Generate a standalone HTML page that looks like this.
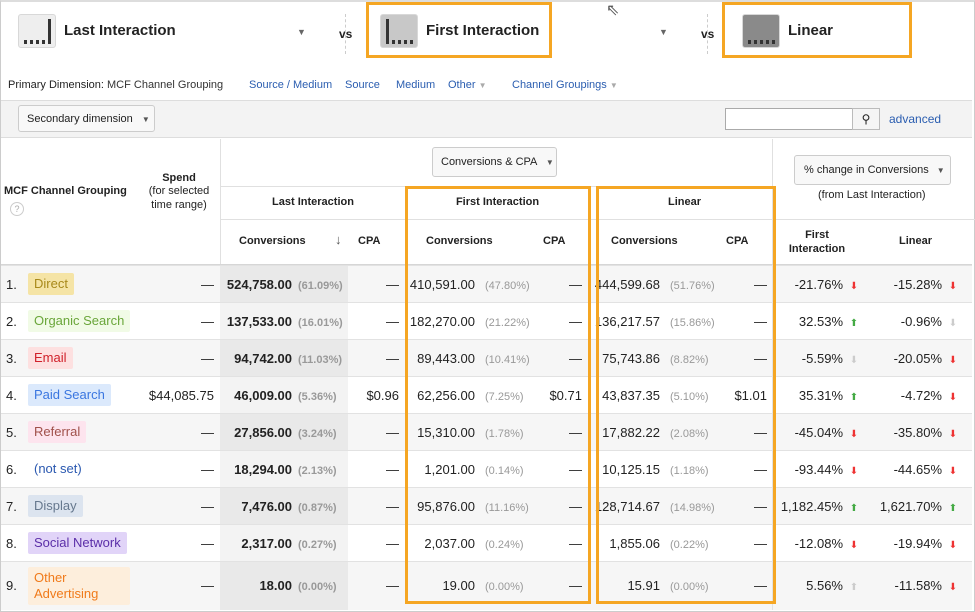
<!DOCTYPE html>
<html><head><meta charset="utf-8"><style>
*{margin:0;padding:0;box-sizing:border-box}
body{width:975px;height:612px;overflow:hidden;background:#fff;font-family:"Liberation Sans",Arial,sans-serif;font-size:13px;color:#222;position:relative}
.a{position:absolute}
.ico{position:absolute;width:38px;height:34px;border:1px solid #d8d8d8;border-radius:3px;background:#eee}
.ico i{position:absolute;background:#333}
.t{font-weight:bold;font-size:15px;color:#222}
.lnk{color:#2a5db0;font-size:11px}
.ob{position:absolute;border:3px solid #f5a623}
.hl{position:absolute;background:#e0e0e0}
.th{position:absolute;font-weight:bold;font-size:11px;text-align:center;color:#222}
table{position:absolute;left:1px;top:265px;border-collapse:collapse;table-layout:fixed;width:971px}
td{height:37px;border-top:1px solid #e2e2e2;font-size:13px;white-space:nowrap;padding:0}
tr:last-child td{height:48px}
tr.o td{background:#f6f6f6}
tr.o td.li{background:#e9e9e9}
td.li{background:#f3f3f3;text-align:right;padding-right:6px;font-weight:bold}
.p{font-size:11px;color:#999;font-weight:normal}
.li .p{color:#999;font-weight:bold;display:inline-block;width:50px;text-align:left;padding-left:6px}
.fc{text-align:right}
.fc .p{display:inline-block;width:55px;text-align:left;padding-left:10px}
.r{text-align:right}
.chip{display:inline-block;padding:3px 6px;border-radius:2px;font-size:13px;line-height:16px}
.up{color:#4a4}.dn{color:#e33}.gr{color:#ccc}
.ar{display:inline-block;width:22px;text-align:center;font-size:10px}
td.c2{padding-right:8px}
</style></head><body>
<div class="a" style="left:0;top:0;width:975px;height:612px;border:1px solid #ccc;border-top:2px solid #ddd"></div>
<div class="ico" style="left:18px;top:14px"><i style="left:29px;top:4px;width:3px;height:25px"></i><i style="left:5px;top:25px;width:3px;height:4px"></i><i style="left:11px;top:25px;width:3px;height:4px"></i><i style="left:17px;top:25px;width:3px;height:4px"></i><i style="left:23px;top:25px;width:3px;height:4px"></i></div>
<div class="a t" style="left:64px;top:22px">Last Interaction</div>
<div class="a" style="left:297px;top:27px;font-size:9px;color:#666">▼</div>
<div class="a" style="left:339px;top:27px;font-weight:bold;font-size:12px">vs</div>
<div class="a" style="left:345px;top:14px;width:1px;height:40px;border-left:1px dashed #ccc"></div>
<div class="ico" style="left:380px;top:14px;background:#c8c8c8"><i style="left:5px;top:4px;width:3px;height:25px"></i><i style="left:11px;top:25px;width:3px;height:4px"></i><i style="left:17px;top:25px;width:3px;height:4px"></i><i style="left:23px;top:25px;width:3px;height:4px"></i><i style="left:29px;top:25px;width:3px;height:4px"></i></div>
<div class="a t" style="left:426px;top:22px">First Interaction</div>
<div class="a" style="left:659px;top:27px;font-size:9px;color:#666">▼</div>
<div class="a" style="left:701px;top:27px;font-weight:bold;font-size:12px">vs</div>
<div class="a" style="left:707px;top:14px;width:1px;height:40px;border-left:1px dashed #ccc"></div>
<div class="ico" style="left:742px;top:14px;background:#8a8a8a"><i style="left:5px;top:25px;width:3px;height:4px"></i><i style="left:11px;top:25px;width:3px;height:4px"></i><i style="left:17px;top:25px;width:3px;height:4px"></i><i style="left:23px;top:25px;width:3px;height:4px"></i><i style="left:29px;top:25px;width:3px;height:4px"></i></div>
<div class="a t" style="left:788px;top:22px">Linear</div>
<div class="ob" style="left:366px;top:2px;width:186px;height:56px"></div>
<div class="ob" style="left:722px;top:2px;width:190px;height:56px"></div>
<div class="a" style="left:606px;top:0;font-size:16px;color:#555">⇖</div>
<div class="a" style="left:8px;top:79px;font-size:11px">Primary Dimension:</div>
<div class="a" style="left:107px;top:79px;font-size:11px;color:#333">MCF Channel Grouping</div>
<div class="a lnk" style="left:249px;top:79px">Source / Medium</div>
<div class="a lnk" style="left:345px;top:79px">Source</div>
<div class="a lnk" style="left:396px;top:79px">Medium</div>
<div class="a lnk" style="left:448px;top:79px">Other <span style="color:#aaa;font-size:8px">▼</span></div>
<div class="a lnk" style="left:512px;top:79px">Channel Groupings <span style="color:#aaa;font-size:8px">▼</span></div>
<div class="a" style="left:1px;top:100px;width:971px;height:38px;background:#f3f3f3;border-top:1px solid #ddd;border-bottom:1px solid #ddd"></div>
<div class="a" style="left:18px;top:105px;width:137px;height:27px;border:1px solid #ccc;border-radius:3px;background:#f8f8f8;font-size:11px;padding:7px 0 0 8px">Secondary dimension <span style="font-size:8px;color:#555;margin-left:6px">▼</span></div>
<div class="a" style="left:725px;top:108px;width:155px;height:22px;border:1px solid #aaa;background:#fff"></div>
<div class="a" style="left:852px;top:108px;width:28px;height:22px;border:1px solid #bbb;background:#f5f5f5;text-align:center;font-size:12px;line-height:20px">⚲</div>
<div class="a" style="left:889px;top:112px;color:#2a5db0;font-size:12px">advanced</div>
<div class="hl" style="left:220px;top:139px;width:1px;height:126px"></div>
<div class="hl" style="left:772px;top:139px;width:1px;height:126px"></div>
<div class="hl" style="left:221px;top:186px;width:551px;height:1px"></div>
<div class="hl" style="left:221px;top:219px;width:754px;height:1px"></div>
<div class="hl" style="left:1px;top:264px;width:971px;height:1px;background:#d6d6d6"></div>
<div class="th" style="left:4px;top:185px">MCF Channel Grouping</div>
<div class="a" style="left:10px;top:202px;width:14px;height:14px;border:1px solid #ccc;border-radius:50%;font-size:9px;color:#aaa;text-align:center;line-height:12px">?</div>
<div class="th" style="left:140px;top:172px;width:78px">Spend<br><span style="font-weight:normal;line-height:14px">(for selected<br>time range)</span></div>
<div class="a" style="left:432px;top:147px;width:125px;height:30px;border:1px solid #ccc;border-radius:3px;background:#f8f8f8;font-size:11px;padding:8px 0 0 8px">Conversions &amp; CPA <span style="font-size:8px;color:#555;margin-left:6px">▼</span></div>
<div class="a" style="left:794px;top:155px;width:157px;height:30px;border:1px solid #ccc;border-radius:3px;background:#f8f8f8;font-size:11px;padding:8px 0 0 9px">% change in Conversions <span style="font-size:8px;color:#555;margin-left:5px">▼</span></div>
<div class="a" style="left:818px;top:189px;font-size:11px">(from Last Interaction)</div>
<div class="th" style="left:221px;top:196px;width:184px">Last Interaction</div>
<div class="th" style="left:405px;top:196px;width:185px">First Interaction</div>
<div class="th" style="left:596px;top:196px;width:177px">Linear</div>
<div class="th" style="left:239px;top:235px">Conversions</div>
<div class="a" style="left:335px;top:232px;font-size:13px;color:#555;font-weight:bold">↓</div>
<div class="th" style="left:358px;top:235px">CPA</div>
<div class="th" style="left:426px;top:235px">Conversions</div>
<div class="th" style="left:543px;top:235px">CPA</div>
<div class="th" style="left:611px;top:235px">Conversions</div>
<div class="th" style="left:726px;top:235px">CPA</div>
<div class="th" style="left:780px;top:228px;width:74px;line-height:14px">First<br>Interaction</div>
<div class="th" style="left:899px;top:235px">Linear</div>
<table>
<colgroup><col style="width:27px"><col style="width:120px"><col style="width:72px"><col style="width:128px"><col style="width:57px"><col style="width:125px"><col style="width:60px"><col style="width:125px"><col style="width:58px"><col style="width:92px"><col style="width:107px"></colgroup>
<tr class="o"><td style="padding-left:5px">1.</td><td><span class="chip" style="background:#f5e4a6;color:#a8891a">Direct</span></td><td class="r" style="padding-right:6px">—</td><td class="li">524,758.00<span class="p">(61.09%)</span></td><td class="r" style="padding-right:6px">—</td><td class="fc">410,591.00<span class="p">(47.80%)</span></td><td class="r" style="padding-right:8px">—</td><td class="fc">444,599.68<span class="p">(51.76%)</span></td><td class="r" style="padding-right:6px">—</td><td class="r">-21.76%<span class="ar dn">⬇</span></td><td class="r c2">-15.28%<span class="ar dn">⬇</span></td></tr>
<tr><td style="padding-left:5px">2.</td><td><span class="chip" style="background:#f1fbe6;color:#6aa63a">Organic Search</span></td><td class="r" style="padding-right:6px">—</td><td class="li">137,533.00<span class="p">(16.01%)</span></td><td class="r" style="padding-right:6px">—</td><td class="fc">182,270.00<span class="p">(21.22%)</span></td><td class="r" style="padding-right:8px">—</td><td class="fc">136,217.57<span class="p">(15.86%)</span></td><td class="r" style="padding-right:6px">—</td><td class="r">32.53%<span class="ar up">⬆</span></td><td class="r c2">-0.96%<span class="ar gr">⬇</span></td></tr>
<tr class="o"><td style="padding-left:5px">3.</td><td><span class="chip" style="background:#fde0e0;color:#d0202a">Email</span></td><td class="r" style="padding-right:6px">—</td><td class="li">94,742.00<span class="p">(11.03%)</span></td><td class="r" style="padding-right:6px">—</td><td class="fc">89,443.00<span class="p">(10.41%)</span></td><td class="r" style="padding-right:8px">—</td><td class="fc">75,743.86<span class="p">(8.82%)</span></td><td class="r" style="padding-right:6px">—</td><td class="r">-5.59%<span class="ar gr">⬇</span></td><td class="r c2">-20.05%<span class="ar dn">⬇</span></td></tr>
<tr><td style="padding-left:5px">4.</td><td><span class="chip" style="background:#dbe9fc;color:#3a76e0">Paid Search</span></td><td class="r" style="padding-right:6px">$44,085.75</td><td class="li">46,009.00<span class="p">(5.36%)</span></td><td class="r" style="padding-right:6px">$0.96</td><td class="fc">62,256.00<span class="p">(7.25%)</span></td><td class="r" style="padding-right:8px">$0.71</td><td class="fc">43,837.35<span class="p">(5.10%)</span></td><td class="r" style="padding-right:6px">$1.01</td><td class="r">35.31%<span class="ar up">⬆</span></td><td class="r c2">-4.72%<span class="ar dn">⬇</span></td></tr>
<tr class="o"><td style="padding-left:5px">5.</td><td><span class="chip" style="background:#fde4ee;color:#a0504a">Referral</span></td><td class="r" style="padding-right:6px">—</td><td class="li">27,856.00<span class="p">(3.24%)</span></td><td class="r" style="padding-right:6px">—</td><td class="fc">15,310.00<span class="p">(1.78%)</span></td><td class="r" style="padding-right:8px">—</td><td class="fc">17,882.22<span class="p">(2.08%)</span></td><td class="r" style="padding-right:6px">—</td><td class="r">-45.04%<span class="ar dn">⬇</span></td><td class="r c2">-35.80%<span class="ar dn">⬇</span></td></tr>
<tr><td style="padding-left:5px">6.</td><td><span class="chip" style="color:#2a58b0">(not set)</span></td><td class="r" style="padding-right:6px">—</td><td class="li">18,294.00<span class="p">(2.13%)</span></td><td class="r" style="padding-right:6px">—</td><td class="fc">1,201.00<span class="p">(0.14%)</span></td><td class="r" style="padding-right:8px">—</td><td class="fc">10,125.15<span class="p">(1.18%)</span></td><td class="r" style="padding-right:6px">—</td><td class="r">-93.44%<span class="ar dn">⬇</span></td><td class="r c2">-44.65%<span class="ar dn">⬇</span></td></tr>
<tr class="o"><td style="padding-left:5px">7.</td><td><span class="chip" style="background:#dce4ef;color:#66788e">Display</span></td><td class="r" style="padding-right:6px">—</td><td class="li">7,476.00<span class="p">(0.87%)</span></td><td class="r" style="padding-right:6px">—</td><td class="fc">95,876.00<span class="p">(11.16%)</span></td><td class="r" style="padding-right:8px">—</td><td class="fc">128,714.67<span class="p">(14.98%)</span></td><td class="r" style="padding-right:6px">—</td><td class="r">1,182.45%<span class="ar up">⬆</span></td><td class="r c2">1,621.70%<span class="ar up">⬆</span></td></tr>
<tr><td style="padding-left:5px">8.</td><td><span class="chip" style="background:#e1d4f8;color:#5b2ea8">Social Network</span></td><td class="r" style="padding-right:6px">—</td><td class="li">2,317.00<span class="p">(0.27%)</span></td><td class="r" style="padding-right:6px">—</td><td class="fc">2,037.00<span class="p">(0.24%)</span></td><td class="r" style="padding-right:8px">—</td><td class="fc">1,855.06<span class="p">(0.22%)</span></td><td class="r" style="padding-right:6px">—</td><td class="r">-12.08%<span class="ar dn">⬇</span></td><td class="r c2">-19.94%<span class="ar dn">⬇</span></td></tr>
<tr class="o"><td style="padding-left:5px">9.</td><td><span class="chip" style="background:#fdeedc;color:#f07a1a;width:102px">Other<br>Advertising</span></td><td class="r" style="padding-right:6px">—</td><td class="li">18.00<span class="p">(0.00%)</span></td><td class="r" style="padding-right:6px">—</td><td class="fc">19.00<span class="p">(0.00%)</span></td><td class="r" style="padding-right:8px">—</td><td class="fc">15.91<span class="p">(0.00%)</span></td><td class="r" style="padding-right:6px">—</td><td class="r">5.56%<span class="ar gr">⬆</span></td><td class="r c2">-11.58%<span class="ar dn">⬇</span></td></tr>
</table>
<div class="hl" style="left:772px;top:265px;width:1px;height:345px;background:#e2e2e2"></div>
<div class="ob" style="left:405px;top:186px;width:186px;height:418px"></div>
<div class="ob" style="left:596px;top:186px;width:180px;height:418px"></div>
</body></html>
